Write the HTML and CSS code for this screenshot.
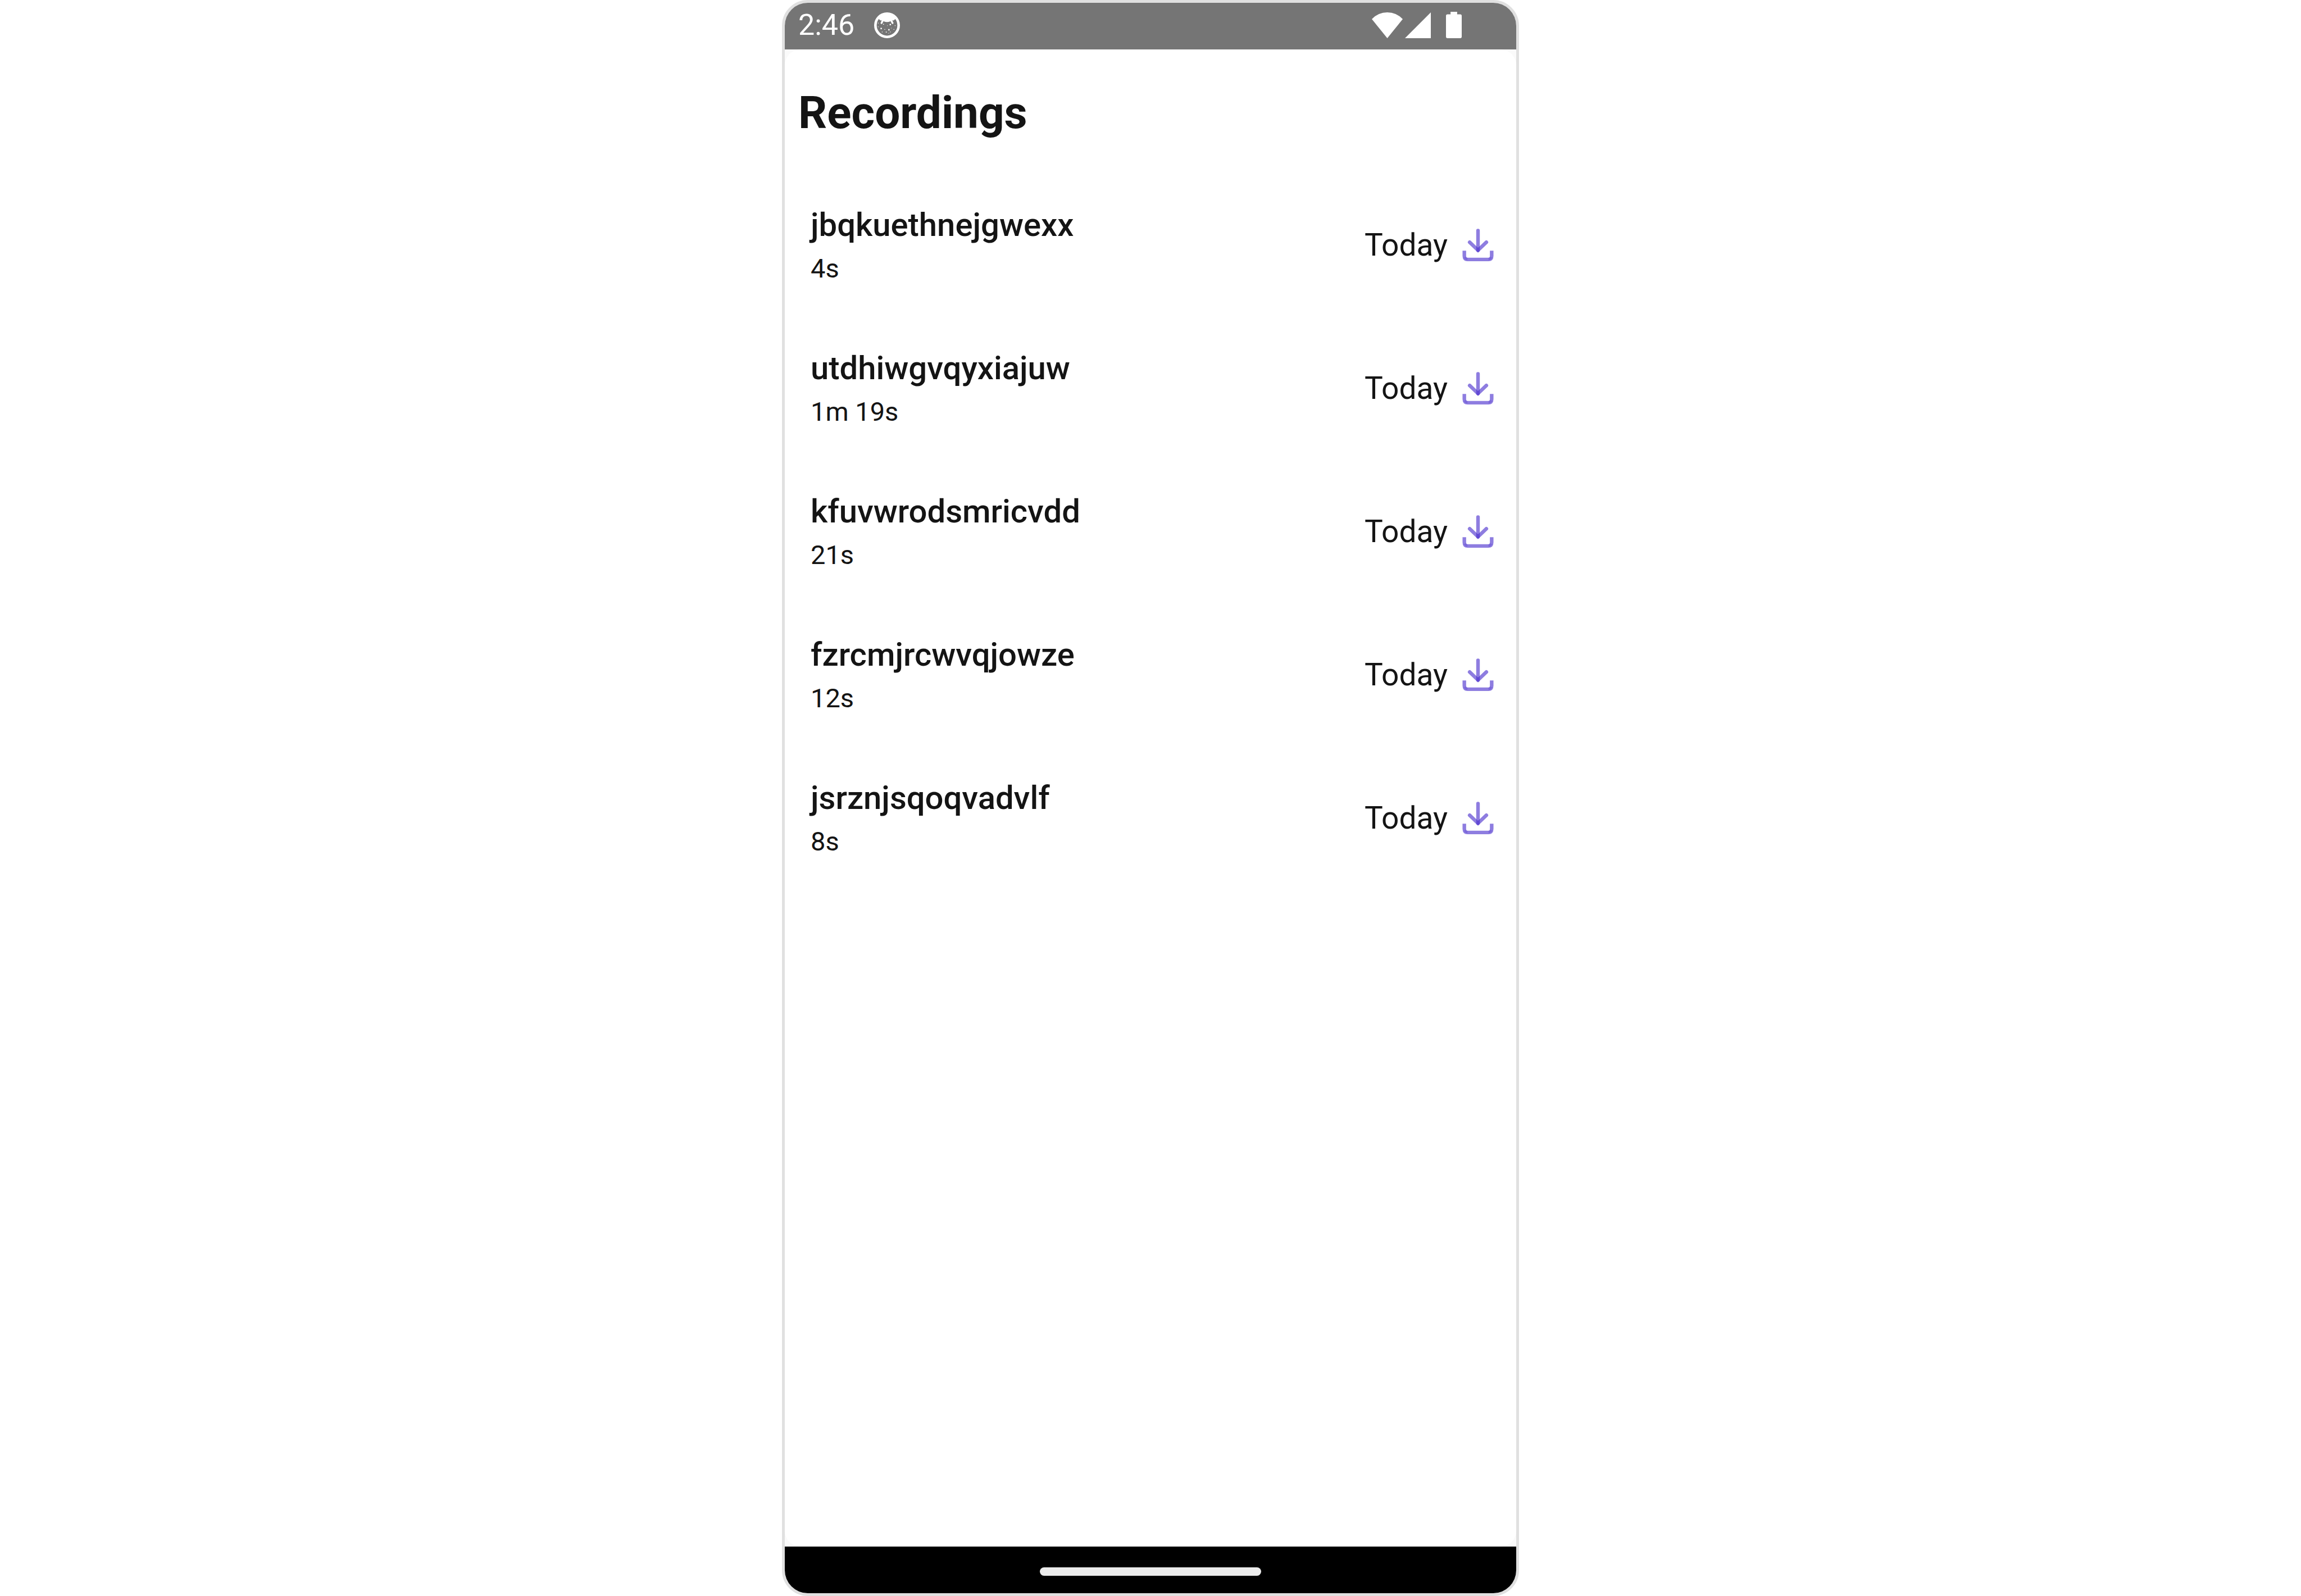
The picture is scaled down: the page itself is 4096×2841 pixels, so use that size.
FILE: index.html
```html
<!DOCTYPE html>
<html lang="en">
<head>
<meta charset="utf-8">
<title>Recordings</title>
<link rel="stylesheet" href="styles.css">
</head>
<body>
<svg class="defs" aria-hidden="true">
  <symbol id="download" viewBox="0 0 184 196">
    <g fill="none" stroke="#462acd" stroke-width="21">
      <path stroke-opacity=".61" stroke-linecap="round" d="M92 14V129"/>
      <path stroke-opacity=".61" stroke-linecap="round" d="M43 82L92 129L141 82"/>
      <path stroke-opacity=".61" d="M12 132V162Q12 183 32 183H152Q172 183 172 162V132"/>
      <path stroke-opacity=".25" stroke-width="14" d="M15 170Q20 180 30 183M169 170Q164 180 154 183"/>
    </g>
  </symbol>
</svg>
<div class="phone">
  <header class="status">
    <time class="clock">2:46</time>
    <svg class="face" viewBox="0 0 150 150" aria-hidden="true">
      <circle cx="75" cy="75" r="67.5" fill="none" stroke="#fff" stroke-width="15"/>
      <path fill="#fff" d="M22 34L42 8H108L128 34L113 47Q100 46 94 52Q75 60 56 52Q50 46 37 47Z"/>
      <path stroke="#fff" stroke-width="11" stroke-linecap="round" d="M51 46L43 62M99 46L107 62"/>
      <path fill="#fff" d="M22 60h4v4h-4zM22 82h4v4h-4zM37 90h8v8h-8zM52 67h5v5h-5zM76 76h3v3h-3zM90 67h8v8h-8zM120 75h4v4h-4zM99 90h3v3h-3zM82 97h8v8h-8zM113 97h4v4h-4zM60 97h4v4h-4zM45 112h4v4h-4zM68 112h5v5h-5zM92 112h4v4h-4zM83 120h3v3h-3z"/>
    </svg>
    <div class="indicators">
      <svg class="wifi" viewBox="0 0 180 150" aria-hidden="true"><path fill="#fff" d="M0 39Q38 0 90 0T180 39L90 150Z"/></svg>
      <svg class="signal" viewBox="0 0 150 150" aria-hidden="true"><path fill="#fff" d="M150 0V150H0Z"/></svg>
      <svg class="battery" viewBox="0 0 93 156" aria-hidden="true"><path fill="#fff" d="M27 0H66V15H84Q93 15 93 24V147Q93 156 84 156H9Q0 156 0 147V24Q0 15 9 15H27Z"/></svg>
    </div>
  </header>
  <main class="screen">
    <h1 class="title">Recordings</h1>
    <ul class="list">
      <li class="row">
        <div class="info"><h2 class="name">jbqkuethnejgwexx</h2><p class="length">4s</p></div>
        <span class="day">Today</span>
        <button class="download" aria-label="Download"><svg><use href="#download"/></svg></button>
      </li>
      <li class="row">
        <div class="info"><h2 class="name">utdhiwgvqyxiajuw</h2><p class="length">1m 19s</p></div>
        <span class="day">Today</span>
        <button class="download" aria-label="Download"><svg><use href="#download"/></svg></button>
      </li>
      <li class="row">
        <div class="info"><h2 class="name">kfuvwrodsmricvdd</h2><p class="length">21s</p></div>
        <span class="day">Today</span>
        <button class="download" aria-label="Download"><svg><use href="#download"/></svg></button>
      </li>
      <li class="row">
        <div class="info"><h2 class="name">fzrcmjrcwvqjowze</h2><p class="length">12s</p></div>
        <span class="day">Today</span>
        <button class="download" aria-label="Download"><svg><use href="#download"/></svg></button>
      </li>
      <li class="row">
        <div class="info"><h2 class="name">jsrznjsqoqvadvlf</h2><p class="length">8s</p></div>
        <span class="day">Today</span>
        <button class="download" aria-label="Download"><svg><use href="#download"/></svg></button>
      </li>
    </ul>
  </main>
  <footer class="navbar"><div class="handle"></div></footer>
</div>
</body>
</html>
```
FILE: styles.css
```css
* {
  box-sizing: border-box;
  margin: 0;
  padding: 0;
}

body {
  display: flex;
  justify-content: center;
  min-height: 100vh;
  background: #fff;
  color: #141414;
  font-family: Roboto, sans-serif;
}

svg {
  display: block;
}

.defs {
  position: absolute;
  width: 0;
  height: 0;
}

.phone {
  display: flex;
  flex-direction: column;
  width: 100%;
  max-width: 1312px;
  border: 5px solid #e0e0e0;
  border-radius: 46px;
  background: #fafafa;
  overflow: hidden;
}

.status {
  display: flex;
  align-items: center;
  height: 83px;
  padding: 0 97px 4px 24px;
  background: #757575;
  color: #fff;
}

.clock {
  font-size: 52px;
  line-height: 80px;
}

.face {
  width: 46px;
  height: 46px;
  margin-left: 35px;
}

.indicators {
  display: flex;
  align-items: center;
  margin-left: auto;
}

.wifi {
  width: 55px;
  height: 46px;
}

.signal {
  width: 46px;
  height: 46px;
  margin-left: 4px;
}

.battery {
  width: 28px;
  height: 47px;
  margin-left: 27px;
}

.screen {
  flex: 1;
  padding-top: 65px;
  border-radius: 28px;
  background: #fff;
}

.title {
  padding: 0 24px;
  font-size: 80px;
  font-weight: 700;
  line-height: 96px;
}

.list {
  margin-top: 59px;
  list-style: none;
}

.row {
  display: flex;
  align-items: center;
  height: 255px;
  padding: 0 40px 0 46px;
}

.info {
  flex: 1;
}

.name {
  font-size: 58px;
  font-weight: 500;
  line-height: 84px;
}

.length {
  font-size: 47px;
  line-height: 72px;
}

.day {
  font-size: 55px;
  line-height: 72px;
}

.download {
  margin-left: 26px;
  border: 0;
  background: none;
  cursor: pointer;
}

.download svg {
  width: 56px;
  height: 60px;
}

.navbar {
  display: flex;
  align-items: center;
  justify-content: center;
  height: 83px;
  padding-top: 5px;
  background: #000;
}

.handle {
  width: 394px;
  height: 15px;
  border-radius: 8px;
  background: #ebebeb;
}
```
